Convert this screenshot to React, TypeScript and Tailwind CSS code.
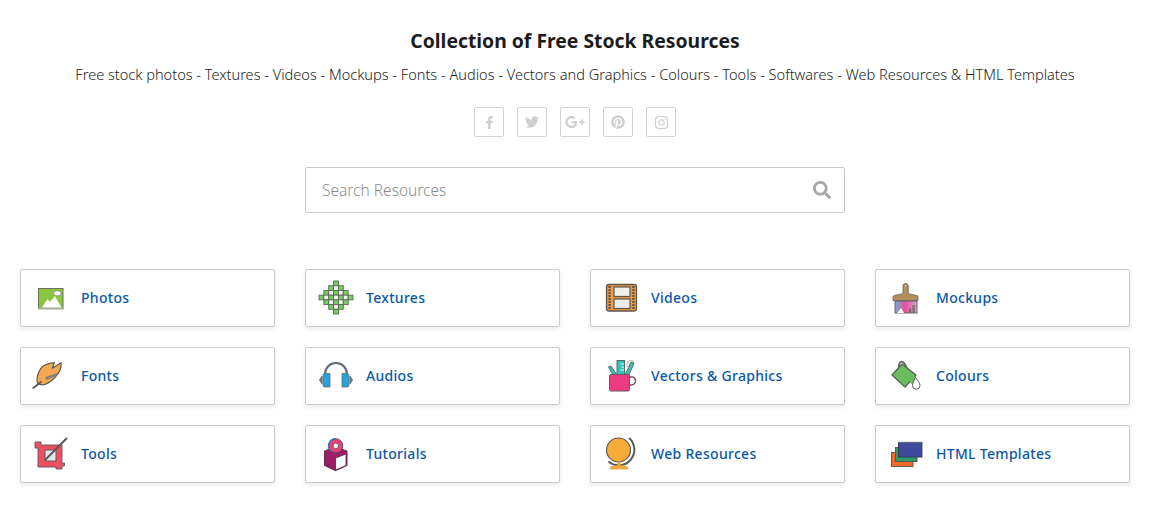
import type { ReactNode } from 'react';
import { FaFacebookF, FaTwitter, FaGooglePlusG, FaPinterest, FaInstagram, FaSearch } from 'react-icons/fa';

const ink = '#5a5a5a';

function PhotosIcon() {
  return (
    <svg viewBox="0 0 40 40" className="h-10 w-10 shrink-0">
      <rect x="6.5" y="10.5" width="24.5" height="20" fill="#8cc63f" stroke="#6b6f5c" />
      <path d="M9.7 30 L15.3 21.3 L18 23.7 L23 18 L29.7 30 Z" fill="#fff" />
      <rect x="6" y="29.5" width="25.5" height="2" fill="#a3ad8e" />
      <ellipse cx="25.3" cy="15.3" rx="3.8" ry="2.6" fill="#fff" stroke="#6b6f5c" strokeWidth="0.6" />
    </svg>
  );
}

function FontsIcon() {
  return (
    <svg viewBox="0 0 40 40" className="h-10 w-10 shrink-0">
      <path d="M5.7 27.3 C3.5 20 8 11 13 9 C16 7.5 19 6.8 22.3 6.7 L20.3 12.3 L29 6.7 C29.5 10 28.5 14 26.3 17.3 C24 21 21 24 18 25.7 C14 28.5 9 30 5.7 27.3 Z" fill="#f4a950" stroke={ink} strokeWidth="1.2" strokeLinejoin="round" />
      <path d="M13.5 21 L26 16.8 L23.5 20.5 L14 24 Z" fill="#86817a" />
      <path d="M1.3 32 L9 26" stroke={ink} strokeWidth="1.7" strokeLinecap="round" />
    </svg>
  );
}

function ToolsIcon() {
  return (
    <svg viewBox="0 0 40 40" className="h-10 w-10 shrink-0">
      <path d="M6 8 H9 V11 H30 V29 H32.5 V32 H30 V35 H24 V33 H6 V14 H3 V8 Z" fill="#f04f63" stroke={ink} strokeWidth="0.9" strokeLinejoin="round" />
      <rect x="13" y="16" width="11" height="11" fill="#e6e6e6" stroke={ink} strokeWidth="1" />
      <path d="M13 26 L35 4" stroke={ink} strokeWidth="1.9" />
    </svg>
  );
}

function TexturesIcon() {
  const cell = 34 / 7;
  const rowCell = 33 / 7;
  const widths = [0, 1, 2, 3, 2, 1, 0];
  const cells: ReactNode[] = [];
  widths.forEach((w, r) => {
    for (let c = 3 - w; c <= 3 + w; c++) {
      cells.push(
        <rect
          key={`${r}-${c}`}
          x={2 + c * cell}
          y={3 + r * rowCell}
          width={cell}
          height={rowCell}
          fill={(r + c) % 2 === 1 ? '#76cf5c' : '#f4f6f2'}
          stroke="#5f675c"
          strokeWidth="0.9"
        />,
      );
    }
  });
  return (
    <svg viewBox="0 0 40 40" className="h-10 w-10 shrink-0">
      {cells}
    </svg>
  );
}

function AudiosIcon() {
  return (
    <svg viewBox="0 0 40 40" className="h-10 w-10 shrink-0">
      <path d="M8 19 C8 3 30 3 30 19" fill="none" stroke="#5f6b75" strokeWidth="2.2" />
      <path d="M5 20 L2.5 24 L5 28 Z" fill="#76797c" stroke="#76797c" />
      <path d="M33 20 L35.5 24 L33 28 Z" fill="#76797c" stroke="#76797c" />
      <path d="M8 17.5 H13 V31 H8 C6.5 31 6 30 6 29 V20 C6 18.5 6.5 17.5 8 17.5 Z" fill="#29a3dc" stroke="#5f6b75" strokeWidth="0.8" />
      <path d="M25 17.5 H30 C31.5 17.5 32 18.5 32 20 V29 C32 30 31.5 31 30 31 H25 Z" fill="#29a3dc" stroke="#5f6b75" strokeWidth="0.8" />
    </svg>
  );
}

function TutorialsIcon() {
  return (
    <svg viewBox="0 0 40 40" className="h-10 w-10 shrink-0">
      <path d="M7.5 17 L18.5 13 L30 17 V31.5 L18.5 36.7 L7.5 31.5 Z" fill="#9d1d66" stroke="#55263f" strokeWidth="0.9" />
      <path d="M18.5 24 L29 20 V31.5 L18.5 36 Z" fill="#fff" stroke="#55263f" strokeWidth="0.8" />
      <circle cx="18.8" cy="11.8" r="7" fill="#ee3f72" stroke="#5b4d6d" strokeWidth="1" />
      <path d="M18.8 4.8 A7 7 0 0 0 13.8 16.8" fill="none" stroke="#3f6fc0" strokeWidth="1.6" />
      <circle cx="18.8" cy="11.8" r="2.8" fill="#fff" stroke="#5b4d6d" strokeWidth="0.9" />
    </svg>
  );
}

function VideosIcon() {
  const holes = [9, 12, 15, 18, 21, 24, 27, 30];
  return (
    <svg viewBox="0 0 40 40" className="h-10 w-10 shrink-0">
      <rect x="4.5" y="6.5" width="30" height="26.5" rx="2.5" fill="#ec9a44" stroke="#5f574c" strokeWidth="1.3" />
      <rect x="12" y="9" width="16" height="9.5" fill="#efefef" stroke="#5d564c" strokeWidth="1.2" />
      <rect x="12" y="21" width="16" height="9.5" fill="#efefef" stroke="#5d564c" strokeWidth="1.2" />
      {holes.map((y) => (
        <g key={y}>
          <rect x="6.5" y={y - 0.9} width="2.2" height="1.8" fill="#4f4a43" />
          <rect x="30.3" y={y - 0.9} width="2.2" height="1.8" fill="#4f4a43" />
        </g>
      ))}
    </svg>
  );
}

function VectorsIcon() {
  return (
    <svg viewBox="0 0 40 40" className="h-10 w-10 shrink-0">
      <path d="M6.5 11 L9 10 L15 19 H11 Z" fill="#2fc7bd" stroke={ink} strokeWidth="0.9" />
      <rect x="15" y="4.5" width="7.5" height="15" fill="#2fc7bd" stroke={ink} strokeWidth="0.9" />
      <path d="M18.5 8 H22 M19.5 11 H22 M18.5 14 H22" stroke="#fff" strokeWidth="0.9" />
      <path d="M23 19 L29 6 L32 7 L27 19 Z" fill="#2fc7bd" stroke={ink} strokeWidth="0.9" />
      <path d="M26.5 12 A4 4 0 0 1 32 5.5" fill="none" stroke="#b9bfbf" strokeWidth="1.2" />
      <path d="M28 21 H30.5 A3.5 3.5 0 0 1 33.5 25 A4.5 4.5 0 0 1 29.5 29 H27" fill="none" stroke="#7c4f66" strokeWidth="1.5" />
      <rect x="7.5" y="18.5" width="20" height="16.5" rx="1.5" fill="#ee3a80" stroke="#6b5560" strokeWidth="1" />
    </svg>
  );
}

function WebIcon() {
  return (
    <svg viewBox="0 0 40 40" className="h-10 w-10 shrink-0">
      <path d="M27 4 A15 15 0 0 1 6.5 27.5" fill="none" stroke={ink} strokeWidth="2" />
      <rect x="15.5" y="29" width="3.5" height="3" fill="#f2a93c" />
      <path d="M8 35 C8 30 26 30 26 35 Z" fill="#f7ab38" stroke="#c48c35" strokeWidth="0.6" />
      <circle cx="16.5" cy="16" r="12" fill="#f9ab38" stroke={ink} strokeWidth="1.1" />
    </svg>
  );
}

function MockupsIcon() {
  return (
    <svg viewBox="0 0 40 40" className="h-10 w-10 shrink-0">
      <defs>
        <linearGradient id="mockup-brush" x1="0" x2="1">
          <stop offset="0" stopColor="#6fb0dc" />
          <stop offset="0.45" stopColor="#ec4f9c" />
          <stop offset="1" stopColor="#cfa8cc" />
        </linearGradient>
      </defs>
      <rect x="8" y="23" width="22" height="12" fill="url(#mockup-brush)" stroke={ink} strokeWidth="0.9" />
      <path d="M16 15 V8 A2.6 2.6 0 0 1 21.2 8 V15 C21.5 16.5 29 16.5 31 18.5 V22.5 H6 V18.5 C8 16.5 15.7 16.5 16 15 Z" fill="#b5905f" stroke={ink} strokeWidth="0.8" />
      <circle cx="18.6" cy="8" r="1" fill="#fff" stroke={ink} strokeWidth="0.4" />
      <path d="M10 35 L14 30 L17 35 Z" fill="#fff" />
      <rect x="22" y="30.5" width="2.2" height="4.5" fill="#6e6e6e" />
      <rect x="25.5" y="27" width="2.2" height="8" fill="#6e6e6e" />
    </svg>
  );
}

function ColoursIcon() {
  return (
    <svg viewBox="0 0 40 40" className="h-10 w-10 shrink-0">
      <path d="M12 12 C11 4 17 3 20 13" fill="none" stroke="#6e6e6e" strokeWidth="2" />
      <path d="M5 19 L15 8 L29 19 L18 31 Z" fill="#69bf5f" stroke={ink} strokeWidth="1.2" strokeLinejoin="round" />
      <circle cx="26.5" cy="24.5" r="3.5" fill="#69bf5f" />
      <path d="M28.5 21.5 C31 25 33 27 33 29.5 A3.7 3.7 0 1 1 25.5 29.5 C25.5 27 27 25 28.5 21.5 Z" fill="#fff" stroke={ink} strokeWidth="1" />
    </svg>
  );
}

function HtmlIcon() {
  return (
    <svg viewBox="0 0 40 40" className="h-10 w-10 shrink-0">
      <rect x="4.5" y="18.5" width="21.5" height="14" fill="#ef6a2c" stroke="#6a5a50" strokeWidth="1" />
      <rect x="8.5" y="13.5" width="21.5" height="14" fill="#2d9c6b" stroke="#4f5a55" strokeWidth="1" />
      <rect x="11.5" y="8.5" width="23.5" height="14.5" fill="#3e4a9c" stroke="#3a3a50" strokeWidth="1" />
      <path d="M11 8 H35.5 V23.5" fill="none" stroke="#b5b5bb" strokeWidth="0.8" />
    </svg>
  );
}

const resources = [
  { label: 'Photos', icon: <PhotosIcon /> },
  { label: 'Textures', icon: <TexturesIcon /> },
  { label: 'Videos', icon: <VideosIcon /> },
  { label: 'Mockups', icon: <MockupsIcon /> },
  { label: 'Fonts', icon: <FontsIcon /> },
  { label: 'Audios', icon: <AudiosIcon /> },
  { label: 'Vectors & Graphics', icon: <VectorsIcon /> },
  { label: 'Colours', icon: <ColoursIcon /> },
  { label: 'Tools', icon: <ToolsIcon /> },
  { label: 'Tutorials', icon: <TutorialsIcon /> },
  { label: 'Web Resources', icon: <WebIcon /> },
  { label: 'HTML Templates', icon: <HtmlIcon /> },
];

const socials = [
  { name: 'facebook', icon: <FaFacebookF size={13} /> },
  { name: 'twitter', icon: <FaTwitter size={14} /> },
  { name: 'google', icon: <FaGooglePlusG size={20} /> },
  { name: 'pinterest', icon: <FaPinterest size={14} /> },
  { name: 'instagram', icon: <FaInstagram size={15} /> },
];

export default function App() {
  return (
    <div className="min-h-[509px] bg-white pl-5 pt-[29px] font-['Noto_Sans',sans-serif]">
      <div className="w-[1110px]">
        {/* Heading */}
        <div className="flex flex-col items-center">
          <h1 className="text-[19.35px] font-bold leading-6 text-[#1c1c1c]">Collection of Free Stock Resources</h1>
          <p className="mt-[11px] text-[14.55px] font-light leading-[20px] text-[#222]">
            Free stock photos - Textures - Videos - Mockups - Fonts - Audios - Vectors and Graphics - Colours - Tools - Softwares - Web Resources &amp; HTML Templates
          </p>

          {/* Socials */}
          <div className="mt-[23px] flex gap-[13px]">
            {socials.map((s) => (
              <a
                key={s.name}
                className="flex h-[30px] w-[30px] items-center justify-center rounded-[2px] border border-[#d4d4d4] text-[#cfcfcf]"
              >
                {s.icon}
              </a>
            ))}
          </div>

          {/* Search */}
          <div className="mt-[30px] flex h-[46px] w-[540px] items-center justify-between rounded-[2px] border border-[#c9c9c9] pl-4 pr-[13px]">
            <span className="pt-[2px] text-[15.5px] font-light text-[#8c8c8c]">Search Resources</span>
            <FaSearch size={18} className="text-[#a8a8a8]" />
          </div>
        </div>

        {/* Resource cards */}
        <div className="mt-14 grid grid-cols-4 gap-x-[30px] gap-y-5">
          {resources.map((r) => (
            <a
              key={r.label}
              className="flex h-[58px] items-center gap-[9px] rounded-[2px] border border-[#cbcbcb] bg-white pl-[11px] shadow-[0_2px_5px_rgba(0,0,0,0.09)]"
            >
              {r.icon}
              <span className="pb-[2px] text-[14px] font-medium tracking-[0.3px] text-[#0b57a6]">{r.label}</span>
            </a>
          ))}
        </div>
      </div>
    </div>
  );
}
